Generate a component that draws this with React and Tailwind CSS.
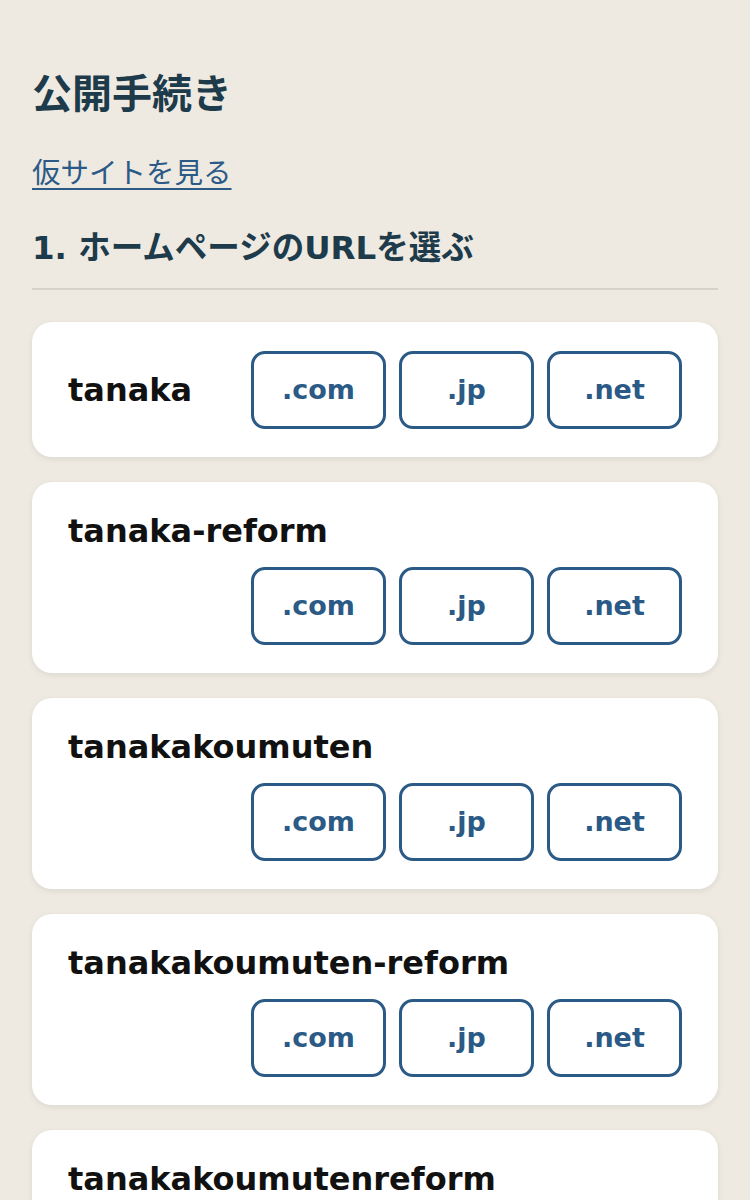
import React from "react";

const names = [
  "tanaka",
  "tanaka-reform",
  "tanakakoumuten",
  "tanakakoumuten-reform",
  "tanakakoumutenreform",
];

const tlds = [".com", ".jp", ".net"];

const font = {
  fontFamily: '"DejaVu Sans", "Noto Sans CJK JP", sans-serif',
};

const DomainCard = ({ name }) => {
  return (
    <div className="bg-white rounded-[20px] shadow-[0_2px_6px_rgba(0,0,0,0.08)] px-9 pt-[29px] pb-[28px] flex flex-wrap items-center justify-between gap-y-[16px]">
      <div className="text-[32px] leading-[40px] font-bold text-[#111111] mr-4">
        {name}
      </div>
      <div className="flex gap-[13px] ml-auto">
        {tlds.map((tld) => (
          <button
            key={tld}
            className="w-[135px] h-[78px] border-[3px] border-[#2b5a86] rounded-[14px] bg-white text-[27px] font-bold text-[#2b5a86] flex items-center justify-center"
          >
            {tld}
          </button>
        ))}
      </div>
    </div>
  );
};

const App = () => {
  return (
    <div className="min-h-screen bg-[#eeeae2] px-8 pt-[70px] pb-10" style={font}>
      <h1 className="text-[40px] leading-[48px] font-bold text-[#1d3b4a]">
        公開手続き
      </h1>
      <a
        href="#"
        className="inline-block mt-[35px] text-[28.5px] leading-[42px] text-[#2b5a86] underline underline-offset-[5px] decoration-[2px]"
      >
        仮サイトを見る
      </a>
      <h2 className="mt-[32px] text-[32.5px] leading-[42px] font-bold text-[#1d3b4a] pb-[19px] border-b-2 border-[#d6d2ca]">
        1. ホームページのURLを選ぶ
      </h2>
      <div className="mt-8 flex flex-col gap-[25px]">
        {names.map((n) => (
          <DomainCard key={n} name={n} />
        ))}
      </div>
    </div>
  );
};

export default App;
